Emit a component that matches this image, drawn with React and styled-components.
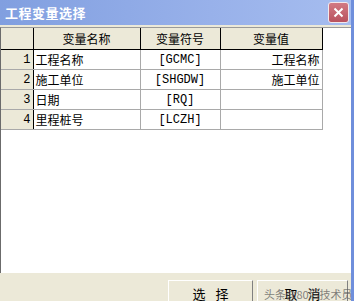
import styled, { createGlobalStyle } from 'styled-components'

const Global = createGlobalStyle`
  html, body { margin: 0; padding: 0; }
  body {
    width: 354px;
    height: 301px;
    overflow: hidden;
    font-family: "Noto Sans CJK SC", "Liberation Sans", sans-serif;
    font-size: 12px;
  }
`

const Window = styled.div`
  width: 354px;
  height: 301px;
  display: flex;
  flex-direction: column;
  background: #ece9d8;
  border-right: 3px solid #6f8fdc;
  box-sizing: border-box;
  overflow: hidden;
`

const TitleBar = styled.div`
  height: 25px;
  flex: none;
  display: flex;
  align-items: center;
  justify-content: space-between;
  padding: 0 2px 0 5px;
  background: linear-gradient(to right, #819fe0, #98b1ea 60%, #a6bdef);
  color: #fff;
  font-weight: bold;
  font-size: 13px;
  letter-spacing: 0.5px;
`

const CloseBtn = styled.div`
  width: 19px;
  height: 19px;
  border: 1px solid #f2e8ec;
  border-radius: 3px;
  background: linear-gradient(#d27a84, #b9525e);
  display: flex;
  align-items: center;
  justify-content: center;
`

const GridArea = styled.div`
  margin-top: 2px;
  height: 245px;
  flex: none;
  background: #fff;
  border-top: 1px solid #9a9a9a;
  border-left: 1px solid #6b6b6b;
`

const Table = styled.table`
  border-collapse: collapse;
  table-layout: fixed;
  width: 321px;
  color: #000;
`

const Head = styled.th`
  height: 21px;
  padding: 0;
  font-weight: normal;
  background: #ece9d8;
  border-right: 1px solid #000;
  border-bottom: 1px solid #000;
  text-align: center;
`

const NumCell = styled.td`
  height: 19px;
  padding: 0 2px 0 0;
  background: #ece9d8;
  text-align: right;
  border-right: 1px solid #000;
  border-bottom: 1px solid #a9a9a9;
  font-family: "Liberation Mono", monospace;
`

const Cell = styled.td`
  height: 19px;
  padding: 0 2px;
  border-right: 1px solid #a9a9a9;
  border-bottom: 1px solid #a9a9a9;
  text-align: ${p => p.$align || 'left'};
  font-family: ${p => p.$mono ? '"Liberation Mono", "Noto Sans CJK SC", monospace' : 'inherit'};
  white-space: nowrap;
  overflow: hidden;
`

const Footer = styled.div`
  flex: 1;
  display: flex;
  justify-content: flex-end;
  align-items: flex-start;
  gap: 4px;
  padding: 7px 3px 0 0;
`

const Button = styled.div`
  position: relative;
  width: ${p => p.$w}px;
  height: 26px;
  box-sizing: border-box;
  border: 1px solid #fff;
  border-right-color: #808080;
  border-bottom-color: #808080;
  background: #ece9d8;
  display: flex;
  align-items: center;
  justify-content: center;
  font-size: 13px;
  letter-spacing: 10px;
  padding-left: 10px;
`

const Watermark = styled.span`
  position: absolute;
  left: 6px;
  top: 5px;
  font-size: 11px;
  letter-spacing: 0;
  color: rgba(90, 90, 90, 0.75);
  white-space: nowrap;
`

const rows = [
  ['1', '工程名称', '[GCMC]', '工程名称'],
  ['2', '施工单位', '[SHGDW]', '施工单位'],
  ['3', '日期', '[RQ]', ''],
  ['4', '里程桩号', '[LCZH]', ''],
]

export default function App() {
  return (
    <Window>
      <Global />
      <TitleBar>
        <span>工程变量选择</span>
        <CloseBtn>
          <svg width="11" height="11" viewBox="0 0 11 11">
            <path d="M1.5 1.5 L9.5 9.5 M9.5 1.5 L1.5 9.5" stroke="#fff" strokeWidth="2" />
          </svg>
        </CloseBtn>
      </TitleBar>
      <GridArea>
        <Table>
          <colgroup>
            <col style={{ width: 32 }} />
            <col style={{ width: 107 }} />
            <col style={{ width: 80 }} />
            <col style={{ width: 102 }} />
          </colgroup>
          <thead>
            <tr>
              <Head></Head>
              <Head>变量名称</Head>
              <Head>变量符号</Head>
              <Head>变量值</Head>
            </tr>
          </thead>
          <tbody>
            {rows.map(r => (
              <tr key={r[0]}>
                <NumCell>{r[0]}</NumCell>
                <Cell>{r[1]}</Cell>
                <Cell $align="center" $mono>{r[2]}</Cell>
                <Cell $align="right">{r[3]}</Cell>
              </tr>
            ))}
          </tbody>
        </Table>
      </GridArea>
      <Footer>
        <Button $w={85}>选择</Button>
        <Button $w={91}>
          取消
          <Watermark>头条@80后技术员</Watermark>
        </Button>
      </Footer>
    </Window>
  )
}
